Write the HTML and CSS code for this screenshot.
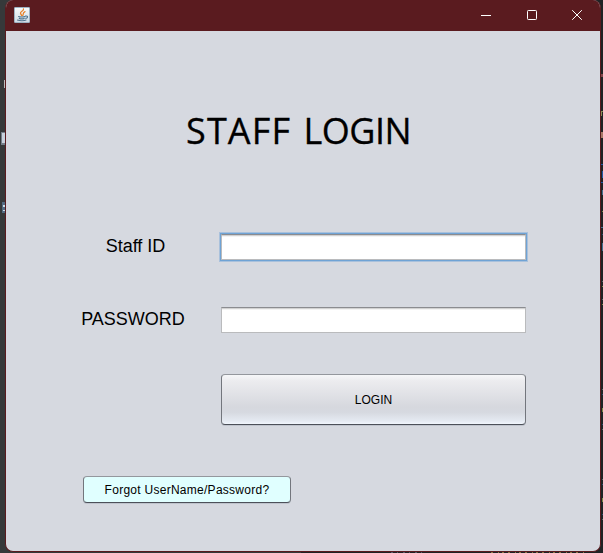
FILE: index.html
```
<!DOCTYPE html>
<html lang="en">
<head>
<meta charset="utf-8">
<title>Staff Login</title>
<link rel="stylesheet" href="styles.css">
</head>
<body>
<svg class="backdrop" width="603" height="553" shape-rendering="crispEdges" aria-hidden="true">
  <path fill="#bbb" d="M4 80h1v8h-1z"/>
  <path fill="#75808b" d="M1 132h4v13h-4z"/><path fill="#c8d1dc" d="M2 133h3v10h-3z"/>
  <path fill="#526b82" d="M2 202h3v11h-3z"/><path fill="#cbdbe6" d="M3 205h2v2h-2zM3 210h2v1h-2z"/>
  <path fill="#83484c" d="M601 74h2v3h-2z"/>
  <path fill="#898b57" d="M601 111h2v1h-2zM601 112h1v4h-1z"/>
  <path fill="#a77866" d="M601 132h2v6h-2z"/>
  <path fill="#2357a5" d="M601 164h2v1h-2zM602 171h1v7h-1zM601 182h2v1h-2z"/>
  <path fill="#456f91" d="M602 190h1v5h-1zM601 227h2v1h-2zM602 243h1v8h-1z"/>
  <path fill="#2e4c74" d="M602 234h1v1h-1zM602 394h1v1h-1zM602 424h1v1h-1zM602 484h1v1h-1zM602 514h1v1h-1z"/>
  <path fill="#858747" d="M602 211h1v1h-1zM602 286h1v1h-1zM602 304h1v1h-1zM602 408h1v4h-1zM602 498h1v4h-1z"/>
  <path fill="#626a6e" d="M602 281h1v1h-1zM602 299h1v1h-1zM602 389h1v1h-1zM602 429h1v1h-1zM602 479h1v1h-1zM602 519h1v1h-1z"/>
  <path stroke="#8d7342" stroke-dasharray="2 5 1 3 2 4" d="M491 552.5H586"/>
  <path stroke="#555765" stroke-dasharray="2 4 1 5" d="M391 552.5H423"/>
</svg>
<main class="window">
  <header class="titlebar">
    <svg class="app-icon" width="16" height="16" viewBox="0 0 16 16">
      <defs><linearGradient id="tile" x2="0" y2="1"><stop stop-color="#f8fafb"/><stop offset="1" stop-color="#cfdbe5"/></linearGradient></defs>
      <rect x=".5" y=".5" width="15" height="15" rx=".5" fill="url(#tile)" stroke="#9eb2c2"/>
      <g fill="none" stroke-linecap="round">
        <path stroke="#e8822b" stroke-width="1.3" d="M9.5 2C10 4 5.8 4.6 6.5 6.5C6.8 7.4 7.5 7.7 7.6 8.6M11 4.6C8.3 5.8 9.9 6.8 8.8 8.4"/>
        <path stroke="#50758f" stroke-width="1.1" d="M4.6 9.5C5.5 10.2 9.8 10.1 11 9.5M11.5 9C14.5 8.7 14 11 11.8 11.4M5.3 11.4C6.8 12 8.8 12 10.2 11.4M3.5 13.1C5.8 14 10.4 13.9 12 13.1"/>
      </g>
    </svg>
    <div class="controls">
      <svg width="12" height="12" viewBox="0 0 12 12"><path d="M1 6.5H11"/></svg>
      <svg width="12" height="12" viewBox="0 0 12 12"><rect x="1.5" y="1.5" width="9" height="9" rx=".8"/></svg>
      <svg width="12" height="12" viewBox="0 0 12 12"><path d="M1.2 1.2L10.8 10.8M10.8 1.2L1.2 10.8"/></svg>
    </div>
  </header>
  <form class="login">
    <h1 class="heading"><span class="wide">STAFF</span> <span class="tight">LOGIN</span></h1>
    <div class="row">
      <label class="label staff-label" for="staff">Staff ID</label>
      <input class="field focused" id="staff" type="text">
    </div>
    <div class="row">
      <label class="label" for="password">PASSWORD</label>
      <input class="field" id="password" type="password">
    </div>
    <button class="button submit" type="button">LOGIN</button>
    <button class="button forgot" type="button">Forgot UserName/Password?</button>
  </form>
</main>
</body>
</html>
```
FILE: styles.css
```
* { box-sizing: border-box; }

body {
  margin: 0;
  width: 603px;
  height: 553px;
  overflow: hidden;
  padding-left: 5px;
  background: linear-gradient(90deg, #36393a 0 50%, #202325 50%);
  font-family: "Liberation Sans", Arial, sans-serif;
  color: #000;
}

.backdrop { position: absolute; left: 0; top: 0; }

.window {
  position: relative;
  width: 596px;
  height: 552px;
  border: 1px solid #5a1b1f;
  border-top: 0;
  border-radius: 8px;
  overflow: hidden;
  background: #d6d9e0;
}

.titlebar {
  height: 31px;
  display: flex;
  justify-content: space-between;
  padding: 7px 17px 0 8px;
  background: #5a1b1f;
}

.controls { display: flex; gap: 34px; padding-top: 2px; }
.controls svg { fill: none; stroke: #fff; stroke-width: 1; }
.controls svg:nth-child(-n+2) { margin-right: -.5px; }

.login { display: flex; flex-direction: column; align-items: flex-start; }

.heading {
  margin: 75px 0 0 180px;
  height: 50px;
  font: 400 36px/50px "Open Sans", "Noto Sans", sans-serif;
  -webkit-text-stroke: .3px #000;
  word-spacing: 3px;
  white-space: nowrap;
}
.wide { letter-spacing: 1.15px; }
.tight { letter-spacing: -.55px; }

.row {
  display: grid;
  grid-template-columns: 140px 305px;
  column-gap: 18px;
  align-items: center;
  height: 26px;
  margin: 78px 0 0 57px;
}
.row + .row { margin-top: 47px; }

.label { margin-top: -2px; font-size: 18px; line-height: 22px; text-align: center; }
.staff-label { padding-left: 5px; }

.field {
  width: 305px;
  height: 26px;
  padding: 2px 6px;
  border: 1px solid #babbbd;
  border-top-color: #8b8c90;
  border-radius: 0;
  outline: 0;
  background: #fff;
  box-shadow: inset 0 1px #d2d2d2, inset 0 2px #f3f3f3;
}
.focused { box-shadow: inset 0 1px #d2d2d2, inset 0 2px #f3f3f3, 0 0 0 1px #6fa3d5, 0 0 0 2px #a9c1dc; }

.button {
  padding: 0;
  border: 1px solid #71747b;
  border-color: #94979d #73767d #4c5059;
  border-radius: 4px;
  font: 12px/14px "Liberation Sans", Arial, sans-serif;
  color: #000;
  box-shadow: 0 1px #bfc4cd;
}

.submit {
  width: 305px;
  height: 51px;
  margin: 41px 0 0 215px;
  background: linear-gradient(#f6f7f9 0, #ececef 12%, #d6d8de 65%, #d6d9e0 76%, #e5eaf2 94%, #f1f6fd 100%);
}

.forgot {
  width: 208px;
  height: 27px;
  margin: 51px 0 0 77px;
  background: #e0ffff;
  letter-spacing: .27px;
}
```
